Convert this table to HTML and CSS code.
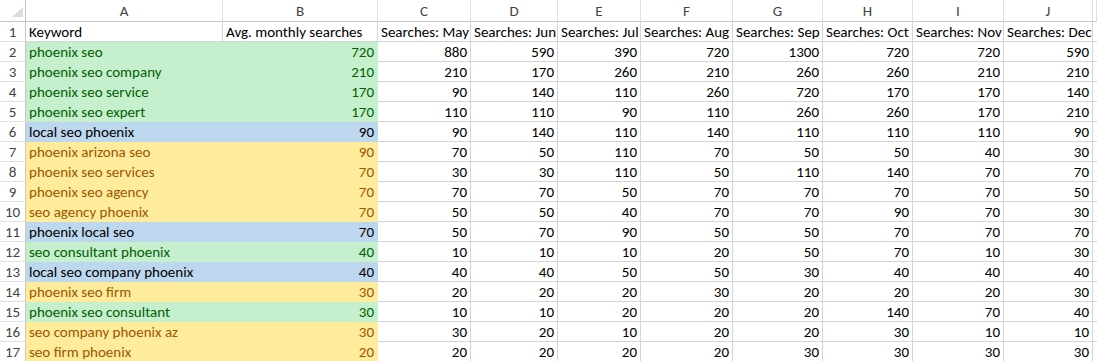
FILE: index.html
```html
<!DOCTYPE html>
<html lang="en">
<head>
<meta charset="utf-8">
<title>Keyword sheet</title>
<link rel="stylesheet" href="styles.css">
</head>
<body>
<div class="sheet">
  <div class="row hdr">
    <div class="corner"><svg width="25" height="21" viewBox="0 0 25 21"><polygon points="23,7 23,17 12,17" fill="#dcdcdc"/></svg></div>
    <div class="ch">A</div><div class="ch">B</div><div class="ch">C</div><div class="ch">D</div><div class="ch">E</div><div class="ch">F</div><div class="ch">G</div><div class="ch">H</div><div class="ch">I</div><div class="ch">J</div><div class="ch"></div>
  </div>
  <div class="row">
    <div class="rh">1</div><div class="c t">Keyword</div><div class="c t">Avg. monthly searches</div><div class="c t">Searches: May</div><div class="c t">Searches: Jun</div><div class="c t">Searches: Jul</div><div class="c t">Searches: Aug</div><div class="c t">Searches: Sep</div><div class="c t">Searches: Oct</div><div class="c t">Searches: Nov</div><div class="c t">Searches: Dec</div><div class="c t"></div>
  </div>
  <div class="row g"><div class="rh">2</div><div class="c kw">phoenix seo</div><div class="c n avg">720</div><div class="c n">880</div><div class="c n">590</div><div class="c n">390</div><div class="c n">720</div><div class="c n">1300</div><div class="c n">720</div><div class="c n">720</div><div class="c n">590</div><div class="c"></div></div>
  <div class="row g"><div class="rh">3</div><div class="c kw">phoenix seo company</div><div class="c n avg">210</div><div class="c n">210</div><div class="c n">170</div><div class="c n">260</div><div class="c n">210</div><div class="c n">260</div><div class="c n">260</div><div class="c n">210</div><div class="c n">210</div><div class="c"></div></div>
  <div class="row g"><div class="rh">4</div><div class="c kw">phoenix seo service</div><div class="c n avg">170</div><div class="c n">90</div><div class="c n">140</div><div class="c n">110</div><div class="c n">260</div><div class="c n">720</div><div class="c n">170</div><div class="c n">170</div><div class="c n">140</div><div class="c"></div></div>
  <div class="row g"><div class="rh">5</div><div class="c kw">phoenix seo expert</div><div class="c n avg">170</div><div class="c n">110</div><div class="c n">110</div><div class="c n">90</div><div class="c n">110</div><div class="c n">260</div><div class="c n">260</div><div class="c n">170</div><div class="c n">210</div><div class="c"></div></div>
  <div class="row b"><div class="rh">6</div><div class="c kw">local seo phoenix</div><div class="c n avg">90</div><div class="c n">90</div><div class="c n">140</div><div class="c n">110</div><div class="c n">140</div><div class="c n">110</div><div class="c n">110</div><div class="c n">110</div><div class="c n">90</div><div class="c"></div></div>
  <div class="row y"><div class="rh">7</div><div class="c kw">phoenix arizona seo</div><div class="c n avg">90</div><div class="c n">70</div><div class="c n">50</div><div class="c n">110</div><div class="c n">70</div><div class="c n">50</div><div class="c n">50</div><div class="c n">40</div><div class="c n">30</div><div class="c"></div></div>
  <div class="row y"><div class="rh">8</div><div class="c kw">phoenix seo services</div><div class="c n avg">70</div><div class="c n">30</div><div class="c n">30</div><div class="c n">110</div><div class="c n">50</div><div class="c n">110</div><div class="c n">140</div><div class="c n">70</div><div class="c n">70</div><div class="c"></div></div>
  <div class="row y"><div class="rh">9</div><div class="c kw">phoenix seo agency</div><div class="c n avg">70</div><div class="c n">70</div><div class="c n">70</div><div class="c n">50</div><div class="c n">70</div><div class="c n">70</div><div class="c n">70</div><div class="c n">70</div><div class="c n">50</div><div class="c"></div></div>
  <div class="row y"><div class="rh">10</div><div class="c kw">seo agency phoenix</div><div class="c n avg">70</div><div class="c n">50</div><div class="c n">50</div><div class="c n">40</div><div class="c n">70</div><div class="c n">70</div><div class="c n">90</div><div class="c n">70</div><div class="c n">30</div><div class="c"></div></div>
  <div class="row b"><div class="rh">11</div><div class="c kw">phoenix local seo</div><div class="c n avg">70</div><div class="c n">50</div><div class="c n">70</div><div class="c n">90</div><div class="c n">50</div><div class="c n">50</div><div class="c n">70</div><div class="c n">70</div><div class="c n">70</div><div class="c"></div></div>
  <div class="row g"><div class="rh">12</div><div class="c kw">seo consultant phoenix</div><div class="c n avg">40</div><div class="c n">10</div><div class="c n">10</div><div class="c n">10</div><div class="c n">20</div><div class="c n">50</div><div class="c n">70</div><div class="c n">10</div><div class="c n">30</div><div class="c"></div></div>
  <div class="row b"><div class="rh">13</div><div class="c kw">local seo company phoenix</div><div class="c n avg">40</div><div class="c n">40</div><div class="c n">40</div><div class="c n">50</div><div class="c n">50</div><div class="c n">30</div><div class="c n">40</div><div class="c n">40</div><div class="c n">40</div><div class="c"></div></div>
  <div class="row y"><div class="rh">14</div><div class="c kw">phoenix seo firm</div><div class="c n avg">30</div><div class="c n">20</div><div class="c n">20</div><div class="c n">20</div><div class="c n">30</div><div class="c n">20</div><div class="c n">20</div><div class="c n">20</div><div class="c n">30</div><div class="c"></div></div>
  <div class="row g"><div class="rh">15</div><div class="c kw">phoenix seo consultant</div><div class="c n avg">30</div><div class="c n">10</div><div class="c n">10</div><div class="c n">20</div><div class="c n">20</div><div class="c n">20</div><div class="c n">140</div><div class="c n">70</div><div class="c n">40</div><div class="c"></div></div>
  <div class="row y"><div class="rh">16</div><div class="c kw">seo company phoenix az</div><div class="c n avg">30</div><div class="c n">30</div><div class="c n">20</div><div class="c n">10</div><div class="c n">20</div><div class="c n">20</div><div class="c n">30</div><div class="c n">10</div><div class="c n">10</div><div class="c"></div></div>
  <div class="row y"><div class="rh">17</div><div class="c kw">seo firm phoenix</div><div class="c n avg">20</div><div class="c n">20</div><div class="c n">20</div><div class="c n">20</div><div class="c n">20</div><div class="c n">30</div><div class="c n">30</div><div class="c n">30</div><div class="c n">30</div><div class="c"></div></div>
</div>
</body>
</html>
```
FILE: styles.css
```css
html, body {
  margin: 0;
  padding: 0;
  background: #ffffff;
}
body {
  font-family: "Carlito", "Calibri", "Liberation Sans", sans-serif;
  font-size: 15px;
  color: #000000;
  overflow: hidden;
}
.sheet {
  width: 1097px;
  height: 361px;
  overflow: hidden;
}
.row {
  display: grid;
  grid-template-columns: 26px 197px 155px 93px 87px 83px 92px 90px 90px 91px 89px 1fr;
  height: 20px;
}
.row.hdr {
  height: 22px;
}
.row > div {
  box-sizing: border-box;
  border-right: 1px solid #d4d4d4;
  border-bottom: 1px solid #d4d4d4;
  overflow: hidden;
  white-space: nowrap;
  line-height: 18px;
  padding-top: 1px;
}
.corner {
  padding: 0 !important;
  border-right-color: #c6c6c6 !important;
  border-bottom-color: #c6c6c6 !important;
}
.corner svg {
  display: block;
}
.ch {
  text-align: center;
  color: #444444;
  padding-top: 2px !important;
  border-bottom-color: #c6c6c6 !important;
  border-right-color: #e1e1e1 !important;
}
.rh {
  text-align: center;
  color: #444444;
  border-right-color: #c6c6c6 !important;
  border-bottom-color: #e1e1e1 !important;
}
.c {
  padding-left: 3px;
  padding-right: 3px;
}
.n {
  text-align: right;
}
.row.g .kw, .row.g .avg {
  background: #c6efce;
  color: #006100;
  border-color: #c6efce;
}
.row.y .kw, .row.y .avg {
  background: #ffeb9c;
  color: #9c5700;
  border-color: #ffeb9c;
}
.row.b .kw, .row.b .avg {
  background: #bdd7ee;
  color: #000000;
  border-color: #bdd7ee;
}
```
